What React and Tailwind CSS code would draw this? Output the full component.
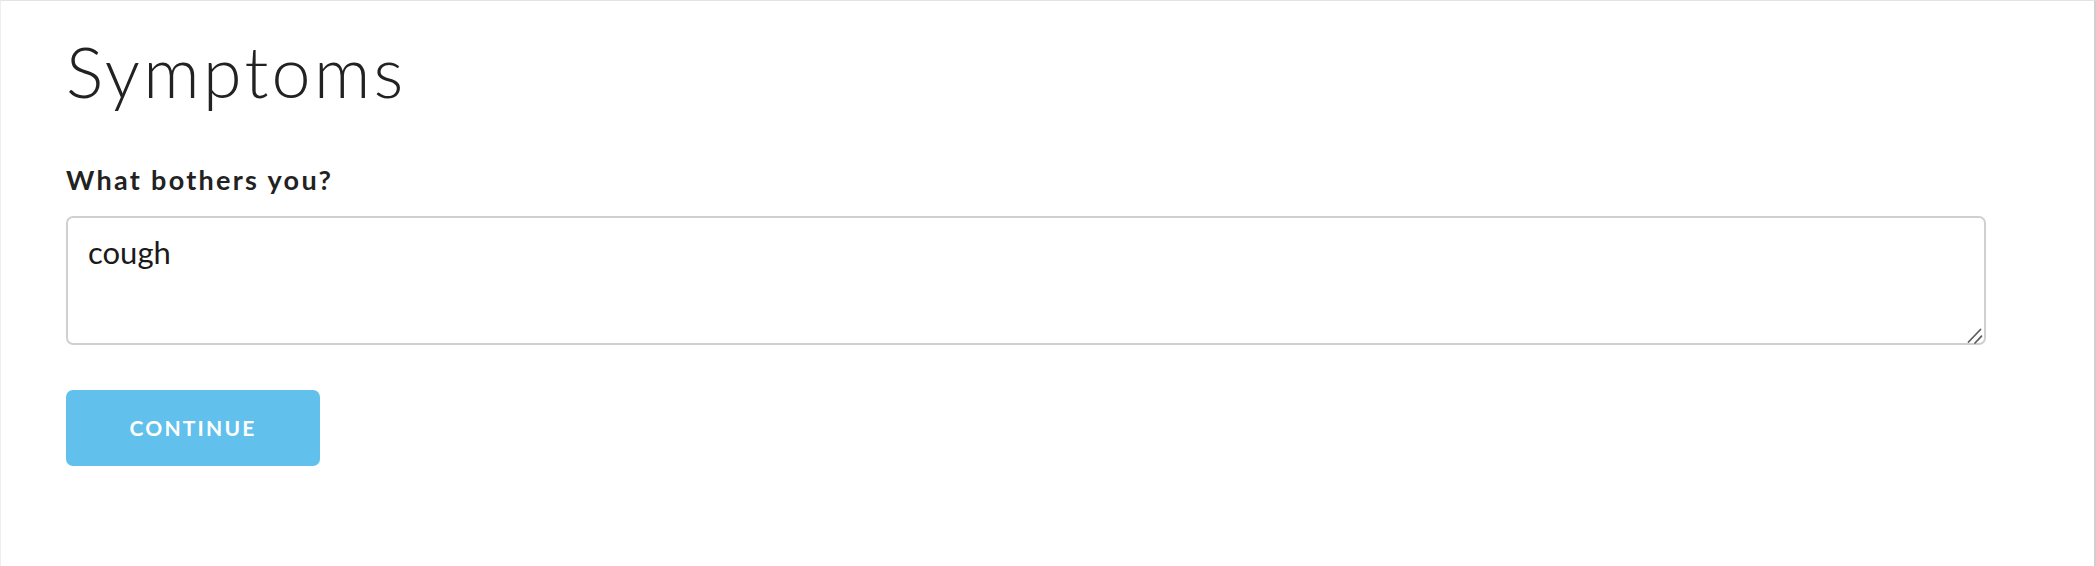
export default function App() {
  return (
    <div className="w-[2096px] h-[566px] bg-white border-t border-t-[#e3e3e3] border-l border-l-[#eeeeee] border-r-2 border-r-[#cfcfcf] box-border" style={{ fontFamily: 'Lato, "Open Sans", sans-serif' }}>
      <div className="pl-[65px] pr-[108px] pt-[30px] flex flex-col">
        <h1 className="text-[70px] leading-[80px] font-light text-[#222222] tracking-[3.3px]">Symptoms</h1>
        <label className="mt-[53px] text-[27px] leading-[32px] font-bold text-[#222222] tracking-[2.3px]">What bothers you?</label>
        <div className="relative mt-[20px] w-[1920px] h-[129px]">
          <textarea
            className="block w-full h-full border-2 border-[#d0d0d0] rounded-[7px] px-[20px] pt-[15px] pb-[10px] text-[31px] leading-[38px] text-[#1a1a1a] outline-none resize-none"
            defaultValue="cough"
            style={{ fontFamily: 'Lato, "Open Sans", sans-serif' }}
          />
          <svg className="absolute right-0 bottom-0 pointer-events-none" width="20" height="20" viewBox="0 0 20 20">
            <line x1="2.5" y1="17" x2="14.5" y2="4.5" stroke="#5f5f5f" strokeWidth="1.8" strokeLinecap="round" />
            <line x1="9" y1="18" x2="15.5" y2="11.2" stroke="#5f5f5f" strokeWidth="1.8" strokeLinecap="round" />
          </svg>
        </div>
        <button className="mt-[45px] w-[254px] h-[76px] rounded-[7px] bg-[#61c1ec] text-white text-[21px] font-bold tracking-[2.2px] flex items-center justify-center">
          CONTINUE
        </button>
      </div>
    </div>
  );
}
